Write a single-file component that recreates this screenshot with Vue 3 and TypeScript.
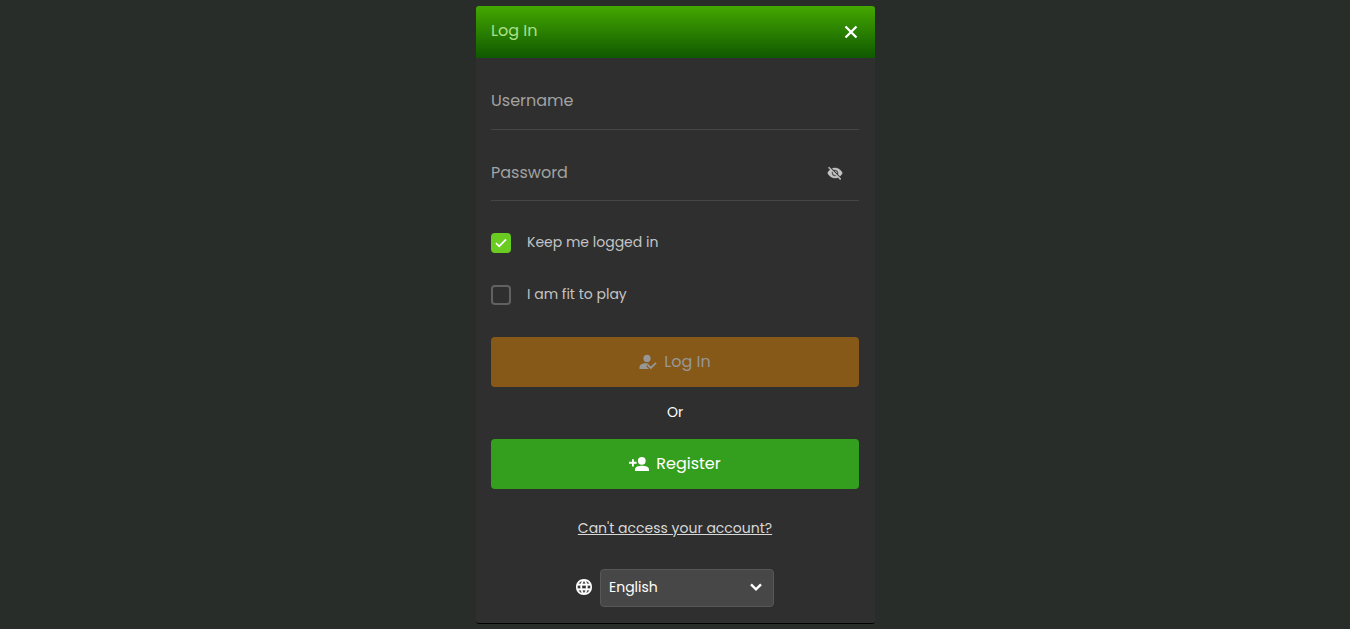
<script setup lang="ts">
import { ref } from 'vue'

const username = ref('')
const password = ref('')
const showPassword = ref(false)
const keepLoggedIn = ref(true)
const fitToPlay = ref(false)
const language = ref('English')
</script>

<template>
  <main class="page">
    <section class="dialog" aria-labelledby="dialog-title">
      <header class="header">
        <h1 id="dialog-title" class="title">Log In</h1>
        <button class="close" type="button" aria-label="Close">
          <svg width="14" height="14" viewBox="0 0 14 14">
            <path d="M1.5 1.5 12.5 12.5M12.5 1.5 1.5 12.5" fill="none" stroke="#fff" stroke-width="2.3" />
          </svg>
        </button>
      </header>

      <form class="body" @submit.prevent>
        <div class="field">
          <input v-model="username" type="text" placeholder="Username" aria-label="Username" />
        </div>
        <div class="field">
          <input
            v-model="password"
            :type="showPassword ? 'text' : 'password'"
            placeholder="Password"
            aria-label="Password"
          />
          <button class="reveal" type="button" aria-label="Show password" @click="showPassword = !showPassword">
            <svg width="16" height="16" viewBox="0 0 24 24" fill="#c4c4c4" stroke="#c4c4c4" stroke-width="0.7">
              <path
                d="M12 7c2.76 0 5 2.24 5 5 0 .65-.13 1.26-.36 1.83l2.92 2.92c1.51-1.26 2.7-2.89 3.43-4.75-1.73-4.39-6-7.5-11-7.5-1.4 0-2.74.25-3.98.7l2.16 2.16C10.74 7.13 11.35 7 12 7zM2 4.27l2.28 2.28.46.46C3.08 8.3 1.78 10.02 1 12c1.73 4.39 6 7.5 11 7.5 1.55 0 3.03-.3 4.38-.84l.42.42L19.73 22 21 20.73 3.27 3 2 4.27zM7.53 9.8l1.55 1.55c-.05.21-.08.43-.08.65 0 1.66 1.34 3 3 3 .22 0 .44-.03.65-.08l1.55 1.55c-.67.33-1.41.53-2.2.53-2.76 0-5-2.24-5-5 0-.79.2-1.53.53-2.2zm4.31-.78 3.15 3.15.02-.16c0-1.66-1.34-3-3-3l-.17.01z"
              />
            </svg>
          </button>
        </div>

        <label class="check">
          <input v-model="keepLoggedIn" type="checkbox" />
          <span class="box">
            <svg v-if="keepLoggedIn" width="12" height="10" viewBox="0 0 12 10">
              <path d="M1 5.2 4.2 8.3 11 1.3" fill="none" stroke="#fff" stroke-width="1.8" />
            </svg>
          </span>
          <span class="caption">Keep me logged in</span>
        </label>
        <label class="check">
          <input v-model="fitToPlay" type="checkbox" />
          <span class="box">
            <svg v-if="fitToPlay" width="12" height="10" viewBox="0 0 12 10">
              <path d="M1 5.2 4.2 8.3 11 1.3" fill="none" stroke="#fff" stroke-width="1.8" />
            </svg>
          </span>
          <span class="caption">I am fit to play</span>
        </label>

        <button class="action login" type="submit" disabled>
          <svg width="18" height="16" viewBox="0 0 18 16" fill="currentColor">
            <circle cx="8" cy="4.4" r="3.6" />
            <path d="M9.6 9.5C5 8.6.5 10.3.5 13v2h9.4L7.2 12.2z" />
            <path d="M8.8 11 11.8 14 17 8.8" fill="none" stroke="currentColor" stroke-width="1.8" />
          </svg>
          Log In
        </button>
        <p class="or">Or</p>
        <button class="action register" type="button">
          <svg width="20" height="16" viewBox="0 0 20 16" fill="currentColor">
            <circle cx="12.8" cy="4.8" r="3.9" />
            <path d="M13 9.7c-3.3 0-7 1.1-7 3.4V15h14v-1.9c0-2.3-3.7-3.4-7-3.4z" />
            <path d="M3 3.2h1.9v2.6h2.7v1.9H4.9v2.7H3V7.7H0V5.8h3z" />
          </svg>
          Register
        </button>

        <a class="help" href="#">Can't access your account?</a>

        <div class="language">
          <svg class="globe" width="16" height="16" viewBox="2 2 20 20" fill="#fff" stroke="#fff" stroke-width="0.4">
            <path
              d="M11.99 2C6.47 2 2 6.48 2 12s4.47 10 9.99 10C17.52 22 22 17.52 22 12S17.52 2 11.99 2zm6.93 6h-2.95c-.32-1.25-.78-2.45-1.38-3.56 1.84.63 3.37 1.91 4.33 3.56zM12 4.04c.83 1.2 1.48 2.53 1.91 3.96h-3.82c.43-1.43 1.08-2.76 1.91-3.96zM4.26 14C4.1 13.36 4 12.69 4 12s.1-1.36.26-2h3.38c-.08.66-.14 1.32-.14 2s.06 1.34.14 2H4.26zm.82 2h2.95c.32 1.25.78 2.45 1.38 3.56-1.84-.63-3.37-1.9-4.33-3.56zm2.95-8H5.08c.96-1.66 2.49-2.93 4.33-3.56C8.81 5.55 8.35 6.75 8.03 8zM12 19.96c-.83-1.2-1.48-2.53-1.91-3.96h3.82c-.43 1.43-1.08 2.76-1.91 3.96zM14.34 14H9.66c-.09-.66-.16-1.32-.16-2s.07-1.35.16-2h4.68c.09.65.16 1.32.16 2s-.07 1.34-.16 2zm.25 5.56c.6-1.11 1.06-2.31 1.38-3.56h2.95c-.96 1.65-2.49 2.93-4.33 3.56zM16.36 14c.08-.66.14-1.32.14-2s-.06-1.34-.14-2h3.38c.16.64.26 1.31.26 2s-.1 1.36-.26 2h-3.38z"
            />
          </svg>
          <div class="select">
            <select v-model="language" aria-label="Language">
              <option>English</option>
            </select>
            <svg class="chevron" width="12" height="8" viewBox="0 0 12 8">
              <path d="M1 1.3 6 6.3 11 1.3" fill="none" stroke="#fff" stroke-width="2.4" />
            </svg>
          </div>
        </div>
      </form>
    </section>
  </main>
</template>

<style>
body {
  margin: 0;
  background: #292d2a;
}
</style>

<style scoped>
.page {
  box-sizing: border-box;
  min-height: 100vh;
  padding: 6px 0 5px 1px;
  background: #292d2a;
  color: #fff;
  font-family: Poppins, Inter, sans-serif;
  font-size: 16px;
  line-height: 24px;
}
.page button,
.page input,
.page select {
  font: inherit;
}
.dialog {
  width: 100%;
  max-width: 399px;
  margin: 0 auto;
  background: #2f2f2f;
  border-bottom: 1px solid #000;
  border-radius: 3px;
  overflow: hidden;
  box-sizing: border-box;
}
.header {
  display: flex;
  align-items: center;
  justify-content: space-between;
  height: 52px;
  padding: 0 16px 0 15px;
  box-sizing: border-box;
  background: linear-gradient(#44a800, #0f5800);
}
.title {
  margin: 0;
  padding-bottom: 2px;
  font-size: 16px;
  font-weight: 400;
  color: #abe08a;
}
.close,
.reveal {
  display: flex;
  padding: 1px;
  border: 0;
  background: none;
  cursor: pointer;
}
.body {
  display: flex;
  flex-direction: column;
  padding: 15px 16px 16px 15px;
}
.field {
  display: flex;
  align-items: center;
  height: 57px;
  padding-right: 15px;
  box-sizing: border-box;
  border-bottom: 1px solid #464646;
}
.field + .field {
  height: 56px;
  margin: 15px 0 14px;
}
.field input {
  flex: 1;
  min-width: 0;
  padding: 0;
  border: 0;
  outline: 0;
  background: none;
  color: #fff;
}
.field input::placeholder {
  color: #a2a2a2;
  opacity: 1;
}
.check {
  position: relative;
  display: flex;
  align-items: center;
  gap: 16px;
  height: 20px;
  margin: 18px 0 14px;
  font-size: 14px;
  color: #c4c4c4;
}
.check input {
  position: absolute;
  width: 20px;
  height: 20px;
  margin: 0;
  opacity: 0;
}
.caption {
  padding-bottom: 2px;
}
.box {
  display: flex;
  align-items: center;
  justify-content: center;
  width: 20px;
  height: 20px;
  box-sizing: border-box;
  border: 2px solid #616161;
  border-radius: 4px;
}
.check input:checked + .box {
  border-color: #6acb20;
  background: #6acb20;
}
.action {
  display: flex;
  align-items: center;
  justify-content: center;
  gap: 7px;
  height: 50px;
  border: 0;
  border-radius: 4px;
}
.login {
  margin-top: 18px;
  background: #865918;
  color: #979797;
}
.or {
  margin: 13px 0 15px;
  text-align: center;
  font-size: 14px;
}
.register {
  background: #349f1e;
  color: #fff;
}
.help {
  align-self: center;
  margin: 27px 0 29px;
  font-size: 14px;
  color: #d8d8d8;
  text-decoration: underline;
}
.language {
  display: flex;
  align-items: center;
  justify-content: center;
  gap: 8px;
}
.globe {
  padding-bottom: 2px;
}
.select {
  position: relative;
  width: 174px;
}
.select select {
  display: block;
  width: 100%;
  height: 38px;
  padding: 0 32px 2px 8px;
  appearance: none;
  border: 1px solid #585858;
  border-radius: 4px;
  background: #474747;
  color: #fff;
  font-size: 14px;
}
.chevron {
  position: absolute;
  top: 14px;
  right: 12px;
  pointer-events: none;
}
</style>
